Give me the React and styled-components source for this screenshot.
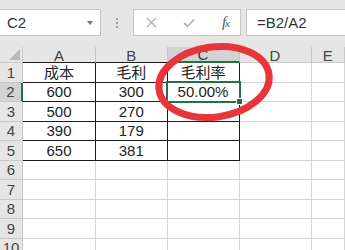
import React from "react";
import styled, { createGlobalStyle } from "styled-components";

const GlobalStyle = createGlobalStyle`
  html, body {
    margin: 0;
    padding: 0;
    background: #ffffff;
    overflow: hidden;
  }
  body {
    font-family: "Liberation Sans", "Noto Sans CJK SC", sans-serif;
  }
`;

const GREEN = "#217346";

const Page = styled.div`
  position: relative;
  width: 345px;
  height: 250px;
  overflow: hidden;
  background: #ffffff;
`;

const Toolbar = styled.div`
  height: 47px;
  box-sizing: border-box;
  padding-top: 9px;
  display: flex;
  align-items: flex-start;
  background: #e6e6e6;
`;

const NameBox = styled.div`
  width: 101px;
  height: 27px;
  box-sizing: border-box;
  background: #ffffff;
  border: 1px solid #c6c6c6;
  border-left: none;
  display: flex;
  align-items: center;
  justify-content: space-between;
  padding: 0 7px 0 7px;
  font-size: 15px;
  color: #333;
`;

const Caret = styled.span`
  width: 0;
  height: 0;
  border-left: 3.5px solid transparent;
  border-right: 3.5px solid transparent;
  border-top: 4px solid #777;
  margin-top: 1px;
`;

const Grip = styled.div`
  width: 32px;
  height: 27px;
  display: flex;
  flex-direction: column;
  align-items: center;
  justify-content: center;
  gap: 2px;

  span {
    width: 2px;
    height: 2px;
    background: #a0a0a0;
  }
`;

const FuncBox = styled.div`
  width: 108px;
  height: 27px;
  box-sizing: border-box;
  background: #ffffff;
  border: 1px solid #c6c6c6;
  display: flex;
  align-items: center;
  justify-content: space-between;
  padding: 0 11px 0 12px;
`;

const Fx = styled.span`
  font-family: "Liberation Serif", serif;
  font-style: italic;
  font-size: 15px;
  color: #555;
  letter-spacing: -1px;

  small {
    font-size: 11px;
  }
`;

const FormulaBox = styled.div`
  flex: 1;
  margin-left: 5px;
  margin-right: -2px;
  height: 27px;
  box-sizing: border-box;
  background: #ffffff;
  border: 1px solid #c6c6c6;
  display: flex;
  align-items: center;
  padding-left: 10px;
  font-size: 15px;
  color: #333;
`;

const Sheet = styled.div`
  display: grid;
  grid-template-columns: 23px 73px 71.5px 72px 72px 1fr;
  grid-template-rows: 16px repeat(10, 19.5px);
`;

const Corner = styled.div`
  position: relative;
  background: #e6e6e6;
  border-right: 1px solid #c8c8c8;
  border-bottom: 1px solid #c8c8c8;

  &::after {
    content: "";
    position: absolute;
    right: 2px;
    bottom: 2px;
    width: 0;
    height: 0;
    border-left: 11px solid transparent;
    border-bottom: 11px solid #b8b8b8;
  }
`;

const ColHead = styled.div`
  background: ${(p) => (p.$active ? "#d3d3d3" : "#e6e6e6")};
  border-right: 1px solid #c8c8c8;
  border-bottom: ${(p) =>
    p.$active ? `2px solid ${GREEN}` : `1px solid ${p.$edge || "#c8c8c8"}`};
  display: flex;
  align-items: center;
  justify-content: center;
  font-size: 15px;
  line-height: 1;
  color: ${(p) => (p.$active ? "#3a3a3a" : "#444")};
  padding-top: 1px;
`;

const RowHead = styled.div`
  background: ${(p) => (p.$active ? "#d3d3d3" : "#e6e6e6")};
  border-right: ${(p) => (p.$active ? `2px solid ${GREEN}` : "1px solid #c8c8c8")};
  border-bottom: 1px solid #c8c8c8;
  display: flex;
  align-items: flex-end;
  justify-content: center;
  font-size: 15px;
  line-height: 1;
  color: #444;
  padding-bottom: 2px;
`;

const Cell = styled.div`
  position: relative;
  border-right: 1px solid ${(p) => (p.$boxed ? "#1a1a1a" : "#d4d4d4")};
  border-bottom: 1px solid ${(p) => (p.$boxed ? "#1a1a1a" : "#d4d4d4")};
  display: flex;
  align-items: flex-end;
  justify-content: center;
  font-size: 15px;
  line-height: 1;
  color: #222;
  padding-bottom: 2px;
  white-space: nowrap;

  ${(p) =>
    p.$selected &&
    `
    &::after {
      content: "";
      position: absolute;
      left: -2px;
      top: -2px;
      right: -2px;
      bottom: -2px;
      border: 2px solid ${GREEN};
      pointer-events: none;
    }
    &::before {
      content: "";
      position: absolute;
      right: -4px;
      bottom: -4px;
      width: 5px;
      height: 5px;
      background: ${GREEN};
      border: 1px solid #fff;
      z-index: 2;
    }
  `}
`;

const Mark = styled.svg`
  position: absolute;
  left: 0;
  top: 0;
  pointer-events: none;
`;

const columns = ["A", "B", "C", "D", "E"];

const data = [
  ["成本", "毛利", "毛利率"],
  ["600", "300", "50.00%"],
  ["500", "270", ""],
  ["390", "179", ""],
  ["650", "381", ""],
  ["", "", ""],
  ["", "", ""],
  ["", "", ""],
  ["", "", ""],
  ["", "", ""],
];

export default function App() {
  return (
    <Page>
      <GlobalStyle />
      <Toolbar>
        <NameBox>
          C2
          <Caret />
        </NameBox>
        <Grip>
          <span />
          <span />
          <span />
        </Grip>
        <FuncBox>
          <svg width="11" height="11" viewBox="0 0 11 11">
            <path d="M1 1 L10 10 M10 1 L1 10" stroke="#b3b3b3" strokeWidth="1.4" fill="none" />
          </svg>
          <svg width="12" height="10" viewBox="0 0 12 10">
            <path d="M1 5 L4.5 8.5 L11 1.5" stroke="#b3b3b3" strokeWidth="1.8" fill="none" />
          </svg>
          <Fx>
            f<small>x</small>
          </Fx>
        </FuncBox>
        <FormulaBox>=B2/A2</FormulaBox>
      </Toolbar>

      <Sheet>
        <Corner />
        {columns.map((c, i) => (
          <ColHead key={c} $active={c === "C"} $edge={i < 2 ? "#1a1a1a" : undefined}>
            {c}
          </ColHead>
        ))}
        {data.map((row, r) => (
          <React.Fragment key={r}>
            <RowHead $active={r === 1}>{r + 1}</RowHead>
            {columns.map((c, ci) => (
              <Cell
                key={c}
                $boxed={ci < 3 && r < 5}
                $selected={r === 1 && ci === 2}
              >
                {row[ci] || ""}
              </Cell>
            ))}
          </React.Fragment>
        ))}
      </Sheet>

      <Mark width="345" height="250" viewBox="0 0 345 250">
        <ellipse
          cx="214"
          cy="82"
          rx="55.5"
          ry="35"
          fill="none"
          stroke="#e8353b"
          strokeWidth="7"
          transform="rotate(-8 214 82)"
        />
      </Mark>
    </Page>
  );
}
